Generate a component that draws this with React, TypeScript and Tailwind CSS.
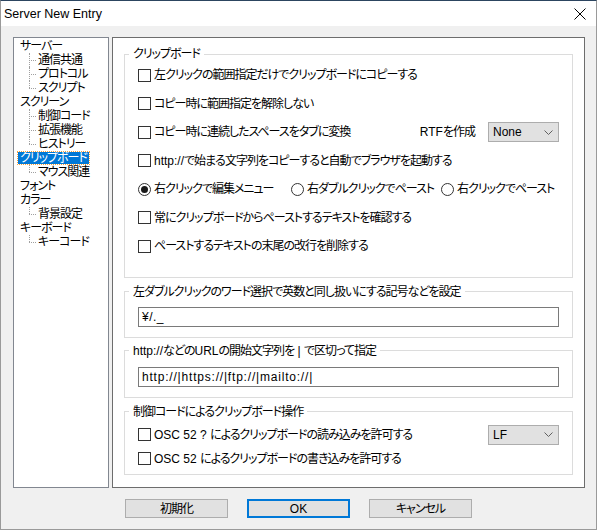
import React from "react"

const tree: { label: string; level: number; last?: boolean; selected?: boolean }[] = [
  { label: "サーバー", level: 0 },
  { label: "通信共通", level: 1 },
  { label: "プロトコル", level: 1 },
  { label: "スクリプト", level: 1, last: true },
  { label: "スクリーン", level: 0 },
  { label: "制御コード", level: 1 },
  { label: "拡張機能", level: 1 },
  { label: "ヒストリー", level: 1, last: true },
  { label: "クリップボード", level: 0, selected: true },
  { label: "マウス関連", level: 1, last: true },
  { label: "フォント", level: 0 },
  { label: "カラー", level: 0 },
  { label: "背景設定", level: 1, last: true },
  { label: "キーボード", level: 0 },
  { label: "キーコード", level: 1, last: true },
]

// latin runs keep normal spacing, japanese runs are tightened
function T({ text }: { text: string }) {
  return (
    <>
      {text.split(/([\x20-\x7e]+)/).map((part, i) =>
        i % 2 === 1 ? (
          <span key={i} className="tracking-normal">
            {part}
          </span>
        ) : (
          part
        )
      )}
    </>
  )
}

function TreeItem({ label, level, last, selected }: (typeof tree)[number]) {
  return (
    <div className="flex h-[14px] items-center">
      {level === 1 && (
        <div className="relative ml-[15px] h-[14px] w-[8px]">
          <div
            className={`absolute left-0 top-0 border-l border-dotted border-[#a0a0a0] ${last ? "h-[7px]" : "h-[14px]"}`}
          />
          <div className="absolute left-0 top-[7px] w-[7px] border-t border-dotted border-[#a0a0a0]" />
        </div>
      )}
      <span
        className={
          selected
            ? "ml-[4px] bg-[#0078d7] px-[2px] leading-[12px] text-white outline-1 outline-dotted outline-[#f7a03a]"
            : level === 1
              ? "px-[1px]"
              : "ml-[4px] px-[2px]"
        }
      >
        {label}
      </span>
    </div>
  )
}

function Check({ label, className = "h-[28.5px]" }: { label: string; className?: string }) {
  return (
    <div className={`flex items-center ${className}`}>
      <span className="h-[13px] w-[13px] shrink-0 border border-[#333333] bg-white" />
      <span className="ml-[3px] whitespace-nowrap">
        <T text={label} />
      </span>
    </div>
  )
}

function Radio({ label, checked, className }: { label: string; checked?: boolean; className?: string }) {
  return (
    <div className={`flex items-center ${className ?? ""}`}>
      <span className="flex h-[13px] w-[13px] shrink-0 items-center justify-center rounded-full border border-[#333333] bg-white">
        {checked && <span className="h-[7px] w-[7px] rounded-full bg-[#1a1a1a]" />}
      </span>
      <span className="ml-[3px] whitespace-nowrap">{label}</span>
    </div>
  )
}

function Combo({ value }: { value: string }) {
  return (
    <div className="flex h-[20px] w-[71px] items-center justify-between border border-[#adadad] bg-[#e1e1e1] pl-[4px] pr-[5px] tracking-normal">
      <span>{value}</span>
      <svg width="9" height="5" viewBox="0 0 9 5" fill="none" stroke="#606060" strokeWidth="1">
        <path d="M0.5 0.5 L4.5 4.5 L8.5 0.5" />
      </svg>
    </div>
  )
}

function Group({ title, className, children }: { title: string; className?: string; children: React.ReactNode }) {
  return (
    <fieldset className={`min-w-0 border border-[#dcdcdc] px-[13px] ${className ?? ""}`}>
      <legend className="ml-[-9px] px-[4px] leading-[14px]">
        <T text={title} />
      </legend>
      {children}
    </fieldset>
  )
}

function Button({ label, primary }: { label: string; primary?: boolean }) {
  return (
    <div
      className={`flex h-[19px] w-[103px] items-center justify-center bg-[#e1e1e1] ${
        primary ? "border-2 border-[#0078d7] tracking-normal" : "border border-[#adadad]"
      }`}
    >
      {label}
    </div>
  )
}

export default function App() {
  return (
    <div className="flex h-[530px] w-[597px] flex-col border-x border-b border-t border-x-[#9a9a9a] border-b-[#9a9a9a] border-t-[#2c4560] bg-[#f0f0f0] font-['Liberation_Sans','Noto_Sans_CJK_JP',sans-serif] text-[12px] leading-[14px] tracking-[-1px] text-black [font-feature-settings:'palt']">
      <div className="flex h-[25px] shrink-0 items-center justify-between bg-white pl-[3px] pr-[10px] tracking-normal">
        <span className="text-[12.5px]">Server New Entry</span>
        <svg width="12" height="12" viewBox="0 0 12 12" stroke="#000" strokeWidth="1">
          <path d="M0.5 0.5 L11.5 11.5 M11.5 0.5 L0.5 11.5" />
        </svg>
      </div>

      <div className="flex gap-[3px] pl-[12px] pt-[11px]">
        <div className="h-[451px] w-[96px] border border-[#828790] bg-white pt-[1px]">
          {tree.map((t) => (
            <TreeItem key={t.label} {...t} />
          ))}
        </div>

        <div className="h-[451px] w-[473px] border border-[#6d6d6d] bg-white px-[11px] pt-[9px]">
          <Group title="クリップボード" className="pb-[16px]">
            <Check label="左クリックの範囲指定だけでクリップボードにコピーする" />
            <Check label="コピー時に範囲指定を解除しない" />
            <div className="flex h-[28.5px] items-center">
              <Check label="コピー時に連続したスペースをタブに変換" className="h-[28.5px]" />
              <span className="ml-auto mr-[13px]">
                <T text="RTFを作成" />
              </span>
              <Combo value="None" />
            </div>
            <Check label="http://で始まる文字列をコピーすると自動でブラウザを起動する" />
            <div className="flex h-[28.5px] items-center">
              <Radio label="右クリックで編集メニュー" checked className="w-[153px]" />
              <Radio label="右ダブルクリックでペースト" className="w-[150px]" />
              <Radio label="右クリックでペースト" />
            </div>
            <Check label="常にクリップボードからペーストするテキストを確認する" />
            <Check label="ペーストするテキストの末尾の改行を削除する" />
          </Group>

          <Group title="左ダブルクリックのワード選択で英数と同し扱いにする記号などを設定" className="mt-[7px] pb-[10px]">
            <div className="mt-[8px] flex h-[20px] items-center border border-[#7a7a7a] bg-white px-[3px] tracking-[0.5px]">
              ¥/._
            </div>
          </Group>

          <Group title="http://などのURLの開始文字列を | で区切って指定" className="mt-[6px] pb-[10px]">
            <div className="mt-[9px] flex h-[20px] items-center border border-[#7a7a7a] bg-white px-[3px] tracking-[0.8px]">
              http://|https://|ftp://|mailto://|
            </div>
          </Group>

          <Group title="制御コードによるクリップボード操作" className="mt-[7px] pb-[3px] pt-[4px]">
            <div className="flex h-[24px] items-center">
              <Check label="OSC 52 ? によるクリップボードの読み込みを許可する" className="h-[24px]" />
              <div className="ml-auto">
                <Combo value="LF" />
              </div>
            </div>
            <Check label="OSC 52 によるクリップボードの書き込みを許可する" className="h-[24px]" />
          </Group>
        </div>
      </div>

      <div className="ml-[124px] mt-[11px] flex gap-[19px]">
        <Button label="初期化" />
        <Button label="OK" primary />
        <Button label="キャンセル" />
      </div>
    </div>
  )
}
